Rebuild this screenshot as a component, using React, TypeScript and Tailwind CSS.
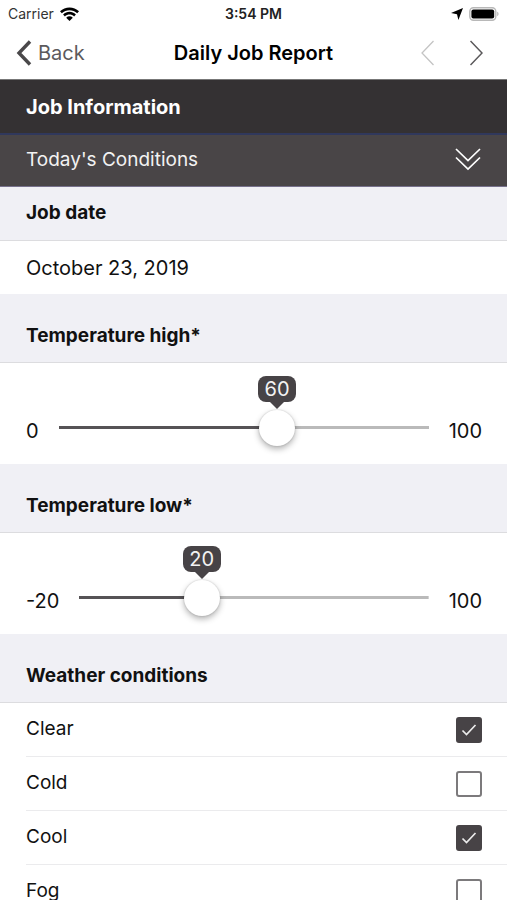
import React, { useState } from 'react';

interface SliderFieldProps {
  id: string;
  label: string;
  min: number;
  max: number;
  initial: number;
}

interface CheckRowProps {
  label: string;
  checked: boolean;
  onToggle: () => void;
}

const StatusBar: React.FC = () => (
  <div className="grid grid-cols-3 items-center h-7 px-2 shrink-0">
    <div className="flex items-center gap-1.5 text-sm text-[#333333]">
      <span>Carrier</span>
      <svg width="19" height="14" viewBox="0 0 19 14" aria-hidden="true">
        <path d="M0 4.3C5-.9 14-.9 19 4.3L17.200 6.200C13 2.200 6 2.200 1.800 6.200z" fill="#000" />
        <path d="M3.100 7.500c3.600-3.600 9.200-3.600 12.800 0l-1.800 1.900c-2.600-2.500-6.600-2.500-9.200 0z" fill="#000" />
        <path d="M6.200 10.700c1.900-1.800 4.700-1.800 6.600 0L9.500 14z" fill="#000" />
      </svg>
    </div>
    <span className="text-center text-sm font-semibold text-[#222222]">3:54 PM</span>
    <div className="flex items-center justify-end gap-1.5">
      <svg width="12" height="12" viewBox="0 0 12 12" aria-hidden="true">
        <path d="M12 0 7.400 12 6 6.200 0 5z" fill="#000" />
      </svg>
      <svg width="30" height="14" viewBox="0 0 30 14" aria-hidden="true">
        <rect x=".8" y=".8" width="26" height="12.4" rx="3.6" fill="#fff" stroke="#b8b8b8" strokeWidth="1.4" />
        <rect x="2.4" y="2.4" width="22.8" height="9.2" rx="2" fill="#000" />
        <path d="M28.2 4.8c1.8.6 1.8 3.8 0 4.4z" fill="#b8b8b8" />
      </svg>
    </div>
  </div>
);

const NavBar: React.FC = () => (
  <nav className="grid grid-cols-[1fr_auto_1fr] items-center h-[52px] px-4 pb-0.5 border-b border-[#777777] shrink-0">
    <button type="button" className="flex items-center gap-1.5 text-xl text-[#5c5a5c] justify-self-start">
      <svg width="16" height="26" viewBox="0 0 16 26" fill="none" aria-hidden="true">
        <path d="M14 1.5 3 13l11 11.5" stroke="#4a484a" strokeWidth="3.4" />
      </svg>
      Back
    </button>
    <h1 className="text-xl font-semibold text-black">Daily Job Report</h1>
    <div className="flex items-center justify-end gap-9 pr-2">
      <button type="button" aria-label="Previous page" disabled>
        <svg width="13" height="26" viewBox="0 0 13 26" fill="none">
          <path d="M12.5 1 1 13l11.5 12" stroke="#c4c4c4" strokeWidth="1.3" />
        </svg>
      </button>
      <button type="button" aria-label="Next page">
        <svg width="13" height="26" viewBox="0 0 13 26" fill="none">
          <path d="M.5 1 12 13 .5 25" stroke="#5a585a" strokeWidth="1.5" />
        </svg>
      </button>
    </div>
  </nav>
);

const SliderField: React.FC<SliderFieldProps> = ({ id, label, min, max, initial }) => {
  const [value, setValue] = useState(initial);
  const ratio = (value - min) / (max - min);
  const center = `calc(18px + (100% - 36px) * ${ratio})`;

  return (
    <section>
      <h3 className="flex items-end h-[69px] px-[26px] pb-3 bg-[#f0f0f5] border-b border-[#dcdcdf] text-[19px] leading-7 font-bold">
        <label htmlFor={id}>{label}</label>
      </h3>
      <div className="flex items-center h-[101px] pl-[26px] pr-[25px] pt-7 gap-5 text-xl">
        <span className="pt-1.5">{min}</span>
        <div className="relative flex-1 h-9">
          <input
            id={id}
            type="range"
            min={min}
            max={max}
            value={value}
            onChange={(e) => setValue(Number(e.target.value))}
            className="block w-full h-9 appearance-none bg-transparent bg-no-repeat bg-center bg-[length:100%_3px] [&::-webkit-slider-thumb]:appearance-none [&::-webkit-slider-thumb]:size-9 [&::-webkit-slider-thumb]:rounded-full [&::-webkit-slider-thumb]:bg-white [&::-webkit-slider-thumb]:shadow-[0_3px_6px_rgba(0,0,0,0.3),0_0_2px_rgba(0,0,0,0.2)]"
            style={{
              backgroundImage: `linear-gradient(to right, #565356 ${ratio * 100}%, #bababa ${ratio * 100}%)`,
            }}
          />
          <output
            htmlFor={id}
            className="absolute bottom-11 -translate-x-1/2 flex items-center justify-center w-[38px] h-[26px] rounded-lg bg-[#474346] text-[#f2f2f2]"
            style={{ left: center }}
          >
            {value}
            <svg width="14" height="7" viewBox="0 0 14 7" className="absolute top-full" aria-hidden="true">
              <path d="M0 0h14L7 7z" fill="#474346" />
            </svg>
          </output>
        </div>
        <span className="pt-1.5">{max}</span>
      </div>
    </section>
  );
};

const CheckRow: React.FC<CheckRowProps> = ({ label, checked, onToggle }) => (
  <li className="ml-[26px] border-b border-[#ebebed]">
    <label className="flex items-center justify-between h-[53px] pr-[25px] text-[19px]">
      {label}
      <span className="grid">
        <input
          type="checkbox"
          checked={checked}
          onChange={onToggle}
          className="col-start-1 row-start-1 size-[26px] appearance-none rounded-[3px] border-2 border-[#7c7a7c] bg-white checked:border-[#474346] checked:bg-[#474346]"
        />
        {checked && (
          <svg
            width="26"
            height="26"
            viewBox="0 0 26 26"
            fill="none"
            className="col-start-1 row-start-1 pointer-events-none"
            aria-hidden="true"
          >
            <path d="m6.5 13.5 4 4 9-9.5" stroke="#ececec" strokeWidth="1.7" />
          </svg>
        )}
      </span>
    </label>
  </li>
);

const App: React.FC = () => {
  const [conditions, setConditions] = useState([
    { label: 'Clear', checked: true },
    { label: 'Cold', checked: false },
    { label: 'Cool', checked: true },
    { label: 'Fog', checked: false },
  ]);

  const toggle = (label: string) => {
    setConditions(conditions.map((c) => (c.label === label ? { ...c, checked: !c.checked } : c)));
  };

  return (
    <div className="flex flex-col h-screen bg-white font-[Inter,'Liberation_Sans',sans-serif] text-[#111111]">
      <StatusBar />
      <NavBar />

      <main className="flex-1 min-h-0 overflow-y-auto [scrollbar-width:none]">
        <h2 className="flex items-center h-[55px] px-[26px] bg-[#343133] border-b-2 border-[#30385c] text-xl font-bold text-white">
          Job Information
        </h2>
        <button
          type="button"
          className="flex items-center justify-between w-full h-[52px] px-[26px] bg-[#494547] border-b border-[#77718c] text-[19px] text-[#f2f2f2]"
        >
          Today's Conditions
          <svg width="26" height="24" viewBox="0 0 26 24" fill="none" className="mb-1" aria-hidden="true">
            <path d="m1 2 12 11.5L25 2M1 10.500l12 11.500 12-11.500" stroke="#fff" strokeWidth="1.7" />
          </svg>
        </button>

        <section>
          <h3 className="flex items-center h-[54px] px-[26px] bg-[#f0f0f5] border-b border-[#dcdcdf] text-[19px] font-bold">
            Job date
          </h3>
          <p className="flex items-center h-[53px] px-[26px] text-xl">October 23, 2019</p>
        </section>

        <SliderField id="temp-high" label="Temperature high*" min={0} max={100} initial={60} />
        <SliderField id="temp-low" label="Temperature low*" min={-20} max={100} initial={20} />

        <section>
          <h3 className="flex items-end h-[69px] px-[26px] pb-3 bg-[#f0f0f5] border-b border-[#dcdcdf] text-[19px] leading-7 font-bold">
            Weather conditions
          </h3>
          <ul>
            {conditions.map((c) => (
              <CheckRow key={c.label} label={c.label} checked={c.checked} onToggle={() => toggle(c.label)} />
            ))}
          </ul>
        </section>
      </main>
    </div>
  );
};

export default App;
